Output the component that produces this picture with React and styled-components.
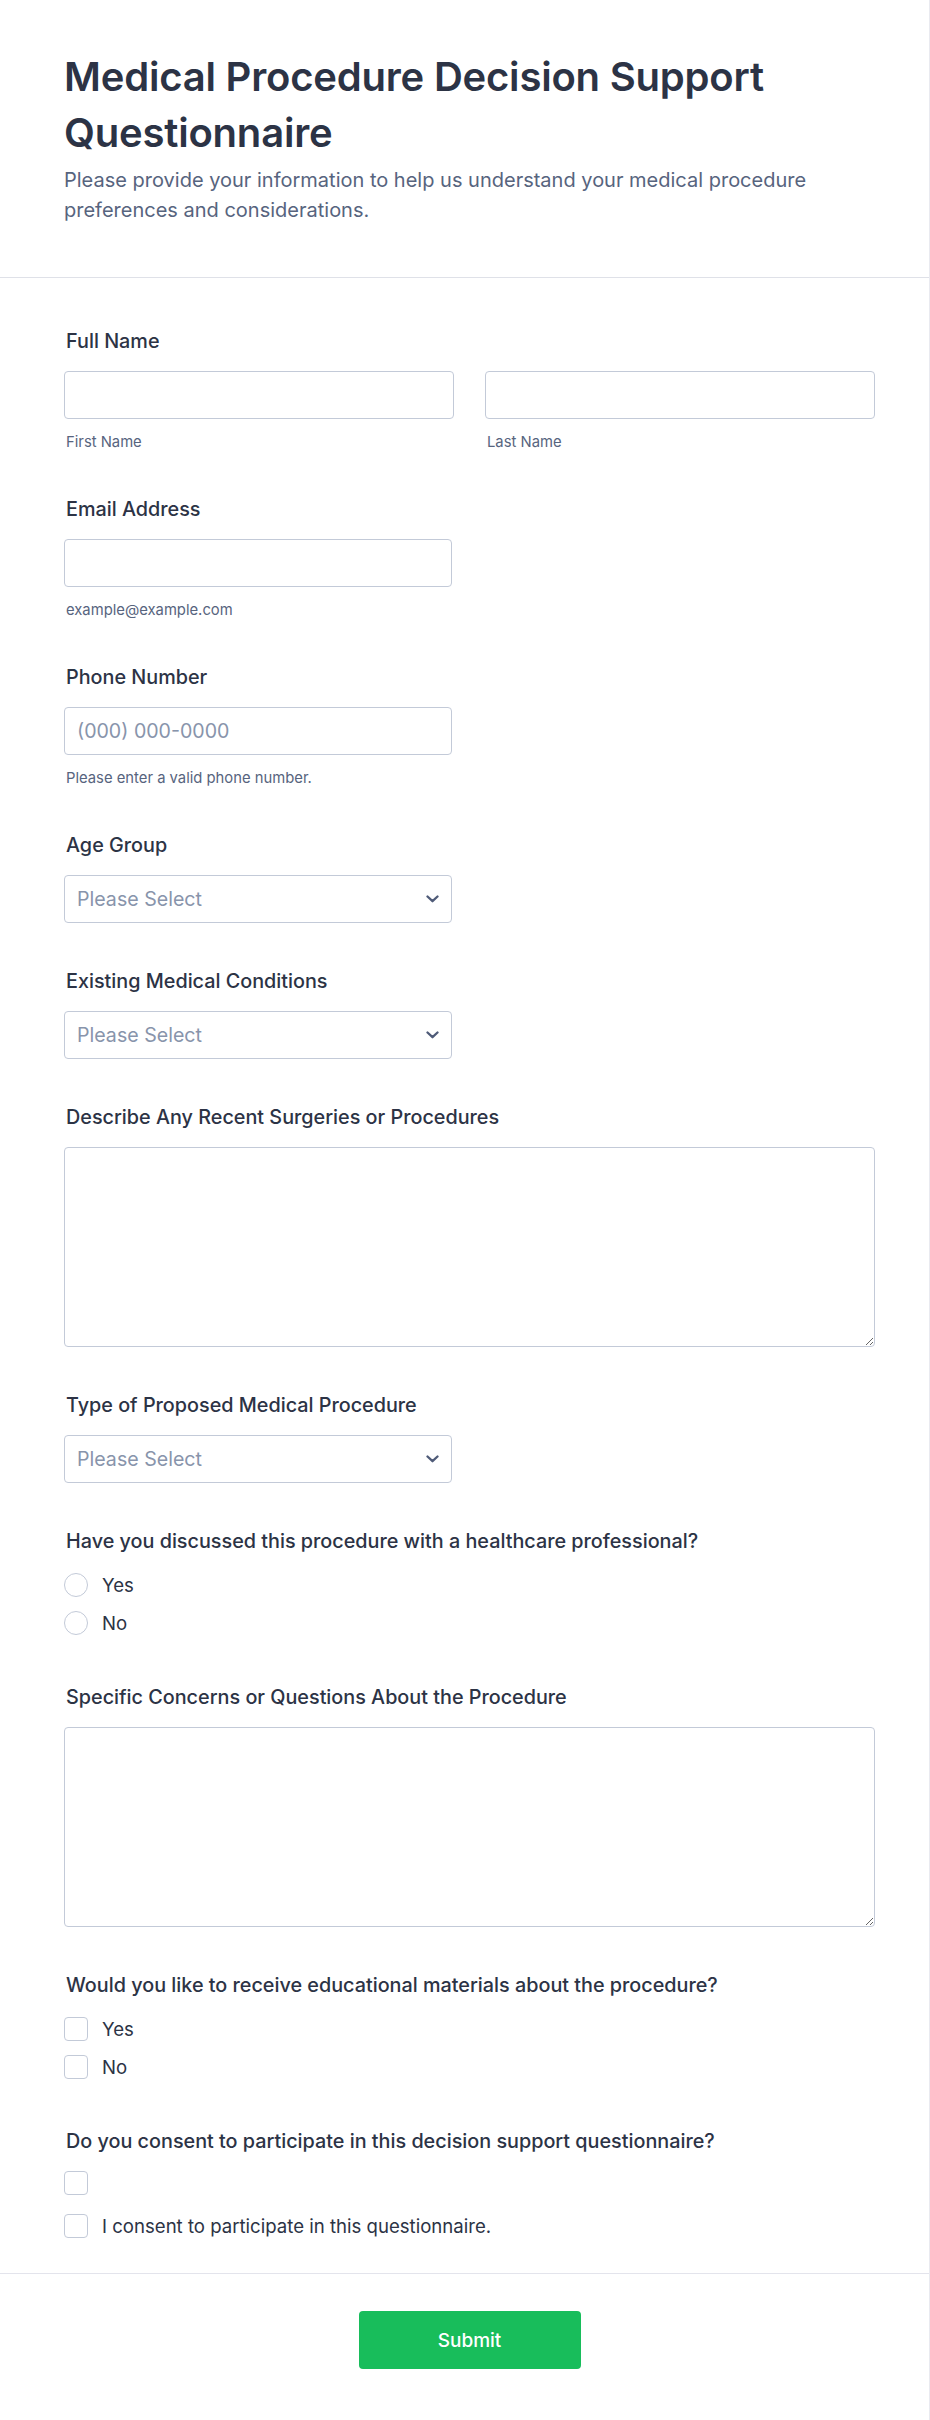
import React from "react";
import styled, { createGlobalStyle } from "styled-components";

const GlobalStyle = createGlobalStyle`
  html, body { margin: 0; padding: 0; background: #ffffff; }
  body { font-family: Inter, "Noto Sans", sans-serif; color: #2c3345; }
  * { box-sizing: border-box; }
`;

const Page = styled.div`
  width: 930px;
  min-height: 2420px;
  background: #fff;
  border-right: 1px solid #e9eaf0;
`;

const Header = styled.header`
  padding: 49px 54px 52px 64px;
  border-bottom: 1px solid #dfe1e8;
`;

const Title = styled.h1`
  margin: 0;
  font-size: 40px;
  line-height: 56px;
  font-weight: 600;
  color: #2c3345;
  letter-spacing: -0.2px;
`;

const Subtitle = styled.p`
  margin: 4px 0 0;
  font-size: 20px;
  line-height: 30px;
  color: #57647e;
`;

const Body = styled.main`
  padding: 49px 54px 31px 64px;
  display: flex;
  flex-direction: column;
  gap: 44px;
`;

const Field = styled.section`
  display: flex;
  flex-direction: column;
`;

const Label = styled.label`
  padding-left: 2px;
  font-size: 19.8px;
  line-height: 28px;
  font-weight: 500;
  color: #2c3345;
  margin-bottom: 16px;
`;

const Row = styled.div`
  display: grid;
  grid-template-columns: 390px 390px;
  column-gap: 31px;
`;

const Col = styled.div`
  display: flex;
  flex-direction: column;
`;

const TextInput = styled.input`
  width: ${(p) => (p.$full ? "100%" : "388px")};
  height: 48px;
  border: 1px solid #c3cad8;
  border-radius: 4px;
  padding: 0 12px;
  font-family: inherit;
  font-size: 19.6px;
  color: #2c3345;
  background: #fff;
  outline: none;
  &::placeholder { color: #8894ab; }
`;

const Sub = styled.span`
  margin-top: 14px;
  padding-left: 2px;
  font-size: 14.8px;
  line-height: 18px;
  color: #57647e;
`;

const SelectWrap = styled.div`
  position: relative;
  width: 388px;
  height: 48px;
`;

const Select = styled.select`
  appearance: none;
  -webkit-appearance: none;
  width: 100%;
  height: 100%;
  border: 1px solid #c3cad8;
  border-radius: 4px;
  padding: 0 36px 0 12px;
  font-family: inherit;
  font-size: 19.6px;
  color: #8894ab;
  background: #fff;
  outline: none;
`;

const Chevron = styled.svg`
  position: absolute;
  right: 13px;
  top: 50%;
  width: 13px;
  height: 8px;
  margin-top: -4px;
  pointer-events: none;
`;

const TextArea = styled.textarea`
  width: 811px;
  height: 200px;
  border: 1px solid #c3cad8;
  border-radius: 4px;
  padding: 10px 12px;
  font-family: inherit;
  font-size: 19.6px;
  color: #2c3345;
  background: #fff;
  resize: both;
  outline: none;
  display: block;
`;

const Options = styled.div`
  display: flex;
  flex-direction: column;
  gap: ${(p) => p.$gap || 10}px;
  padding-bottom: 2px;
`;

const Option = styled.label`
  display: flex;
  align-items: center;
  gap: 14px;
  min-height: ${(p) => (p.$empty ? 24 : 28)}px;
  font-size: 18.6px;
  line-height: 28px;
  color: #2c3345;
`;

const Radio = styled.input.attrs({ type: "radio" })`
  appearance: none;
  -webkit-appearance: none;
  margin: 0;
  width: 24px;
  height: 24px;
  flex: none;
  border: 1px solid #c3cad8;
  border-radius: 50%;
  background: #fff;
`;

const Check = styled.input.attrs({ type: "checkbox" })`
  appearance: none;
  -webkit-appearance: none;
  margin: 0;
  width: 24px;
  height: 24px;
  flex: none;
  border: 1px solid #c3cad8;
  border-radius: 4px;
  background: #fff;
`;

const Footer = styled.footer`
  border-top: 1px solid #e3e4ec;
  padding: 37px 54px 51px 64px;
  display: flex;
  justify-content: center;
`;

const SubmitButton = styled.button`
  width: 222px;
  height: 58px;
  border: none;
  border-radius: 4px;
  background: #18bd5b;
  color: #fff;
  font-family: inherit;
  font-size: 19px;
  font-weight: 500;
  cursor: pointer;
`;

function Dropdown() {
  return (
    <SelectWrap>
      <Select defaultValue="">
        <option value="">Please Select</option>
      </Select>
      <Chevron viewBox="0 0 13 8" fill="none">
        <path d="M1.5 1.5 L6.5 6.2 L11.5 1.5" stroke="#4f5b78" strokeWidth="2.3" strokeLinecap="round" strokeLinejoin="round" />
      </Chevron>
    </SelectWrap>
  );
}

export default function App() {
  return (
    <>
      <GlobalStyle />
      <Page>
        <Header>
          <Title>Medical Procedure Decision Support Questionnaire</Title>
          <Subtitle>
            Please provide your information to help us understand your medical procedure preferences and considerations.
          </Subtitle>
        </Header>
        <Body>
          <Field>
            <Label>Full Name</Label>
            <Row>
              <Col>
                <TextInput $full />
                <Sub>First Name</Sub>
              </Col>
              <Col>
                <TextInput $full />
                <Sub>Last Name</Sub>
              </Col>
            </Row>
          </Field>

          <Field>
            <Label>Email Address</Label>
            <TextInput type="email" />
            <Sub>example@example.com</Sub>
          </Field>

          <Field>
            <Label>Phone Number</Label>
            <TextInput type="tel" placeholder="(000) 000-0000" />
            <Sub>Please enter a valid phone number.</Sub>
          </Field>

          <Field>
            <Label>Age Group</Label>
            <Dropdown />
          </Field>

          <Field>
            <Label>Existing Medical Conditions</Label>
            <Dropdown />
          </Field>

          <Field>
            <Label>Describe Any Recent Surgeries or Procedures</Label>
            <TextArea />
          </Field>

          <Field>
            <Label>Type of Proposed Medical Procedure</Label>
            <Dropdown />
          </Field>

          <Field>
            <Label>Have you discussed this procedure with a healthcare professional?</Label>
            <Options>
              <Option><Radio name="discussed" />Yes</Option>
              <Option><Radio name="discussed" />No</Option>
            </Options>
          </Field>

          <Field>
            <Label>Specific Concerns or Questions About the Procedure</Label>
            <TextArea />
          </Field>

          <Field>
            <Label>Would you like to receive educational materials about the procedure?</Label>
            <Options>
              <Option><Check />Yes</Option>
              <Option><Check />No</Option>
            </Options>
          </Field>

          <Field>
            <Label>Do you consent to participate in this decision support questionnaire?</Label>
            <Options $gap={17}>
              <Option $empty><Check /></Option>
              <Option><Check />I consent to participate in this questionnaire.</Option>
            </Options>
          </Field>
        </Body>
        <Footer>
          <SubmitButton type="button">Submit</SubmitButton>
        </Footer>
      </Page>
    </>
  );
}
